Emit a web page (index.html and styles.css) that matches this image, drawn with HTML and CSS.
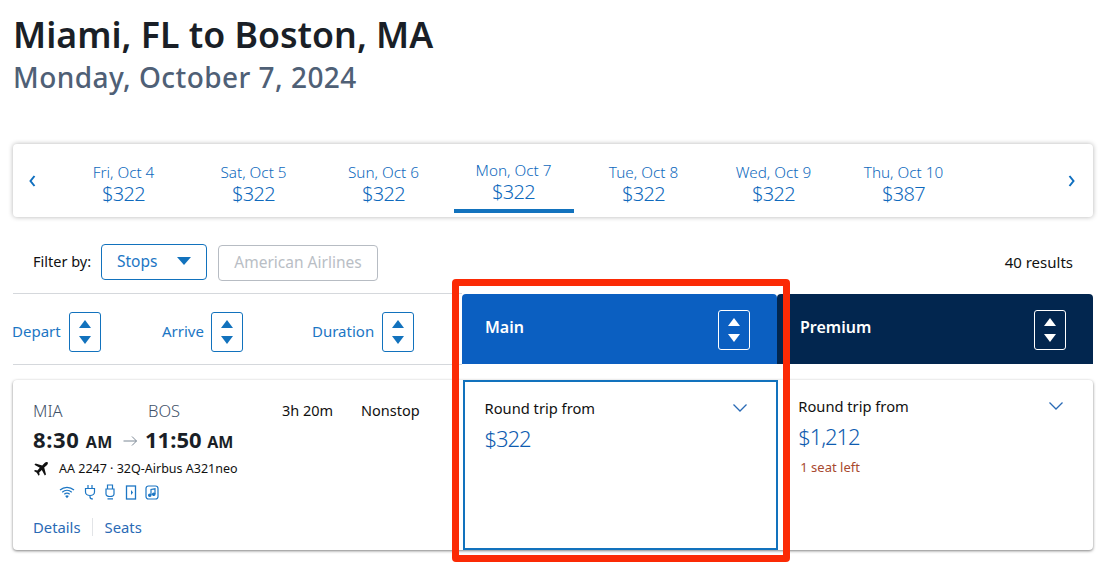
FILE: index.html
```html
<!DOCTYPE html>
<html>
  <head>
    <link rel="stylesheet" href="styles.css">
  </head>
  <body>
    <div class="page">
      <h1 class="route">Miami, FL to Boston, MA</h1>
      <div class="trip-date">Monday, October 7, 2024</div>

      <div class="date-strip">
        <span class="strip-arrow">
          <svg width="9" height="14" viewBox="0 0 9 14"><path d="M6.5 2 L2.5 7 L6.5 12" fill="none" stroke="#0f6fbf" stroke-width="2"/></svg>
        </span>
        <div class="date-list">
          <div class="date-item"><span class="day">Fri, Oct 4</span><span class="fare">$322</span></div>
          <div class="date-item"><span class="day">Sat, Oct 5</span><span class="fare">$322</span></div>
          <div class="date-item"><span class="day">Sun, Oct 6</span><span class="fare">$322</span></div>
          <div class="date-item active"><span class="day">Mon, Oct 7</span><span class="fare">$322</span></div>
          <div class="date-item"><span class="day">Tue, Oct 8</span><span class="fare">$322</span></div>
          <div class="date-item"><span class="day">Wed, Oct 9</span><span class="fare">$322</span></div>
          <div class="date-item"><span class="day">Thu, Oct 10</span><span class="fare">$387</span></div>
        </div>
        <span class="strip-arrow">
          <svg width="9" height="14" viewBox="0 0 9 14"><path d="M2.5 2 L6.5 7 L2.5 12" fill="none" stroke="#0f6fbf" stroke-width="2"/></svg>
        </span>
      </div>

      <div class="filter-row">
        <span class="filter-label">Filter by:</span>
        <button class="filter-btn stops">Stops<span class="caret"></span></button>
        <button class="filter-btn airline">American Airlines</button>
        <span class="results">40 results</span>
      </div>

      <div class="sort-row">
        <div class="sort-cols">
          <div class="sort-col depart">Depart<span class="sort-box"><i class="up"></i><i class="down"></i></span></div>
          <div class="sort-col arrive">Arrive<span class="sort-box"><i class="up"></i><i class="down"></i></span></div>
          <div class="sort-col duration">Duration<span class="sort-box"><i class="up"></i><i class="down"></i></span></div>
        </div>
        <div class="cabin main-cabin"><span class="cabin-name">Main</span><span class="sort-box light"><i class="up"></i><i class="down"></i></span></div>
        <div class="cabin premium-cabin"><span class="cabin-name">Premium</span><span class="sort-box light"><i class="up"></i><i class="down"></i></span></div>
      </div>

      <div class="flight-card">
        <div class="flight-info">
          <div class="flight-top">
            <div class="times">
              <div class="airports"><span class="origin">MIA</span><span>BOS</span></div>
              <div class="clock">
                <span class="time leaving">8:30 <small>AM</small></span>
                <svg class="arrow" width="15" height="12" viewBox="0 0 15 12"><path d="M0.5 6 H13.5 M9 1.5 L13.5 6 L9 10.5" fill="none" stroke="#7b8794" stroke-width="1"/></svg>
                <span class="time">11:50 <small>AM</small></span>
              </div>
            </div>
            <span class="duration-text">3h 20m</span>
            <span class="stops-text">Nonstop</span>
          </div>
          <div class="aircraft">
            <svg width="16" height="16" viewBox="0 0 16 16"><path d="M14.6 1.2 C13.8 .6 12.6 1 11.6 2 L9.2 4.4 L2.6 2.6 L1.4 3.8 L6.8 6.8 L4.4 9.4 L2 9 L1 10 L3.8 11.8 L5.6 14.8 L6.6 13.8 L6.2 11.4 L8.8 9 L11.8 14.6 L13 13.4 L11.2 6.6 L13.8 4.2 C14.8 3.2 15.2 2 14.6 1.2 Z" fill="#111"/></svg>
            <span>AA 2247 · 32Q-Airbus A321neo</span>
          </div>
          <div class="amenities">
            <svg width="16" height="14" viewBox="0 0 16 14" fill="none" stroke="#1c76c4" stroke-width="1.2"><path d="M1 5 C5 1.4 11 1.4 15 5 M3.2 7.2 C6 4.8 10 4.8 12.8 7.2 M5.3 9.3 C6.9 8 9.1 8 10.7 9.3 M7 11.2 C7.6 10.7 8.4 10.7 9 11.2 L8 12.4 Z"/></svg>
            <svg width="12" height="16" viewBox="0 0 12 16" fill="none" stroke="#1c76c4" stroke-width="1.2"><path d="M4 1 V4.5 M8 1 V4.5 M1.5 4.5 H10.5 V8 C10.5 10 8.5 11.5 6 11.5 C3.5 11.5 1.5 10 1.5 8 Z M6 11.5 V13 C6 14.5 7 15 9 15"/></svg>
            <svg width="12" height="16" viewBox="0 0 12 16" fill="none" stroke="#1c76c4" stroke-width="1.2"><path d="M3.5 1 H8.5 V5 H3.5 Z M2 5 H10 V10 C10 11.5 8.5 12.5 6 12.5 C3.5 12.5 2 11.5 2 10 Z M3.5 14.8 H9"/></svg>
            <svg width="12" height="15" viewBox="0 0 12 15" fill="none" stroke="#1c76c4" stroke-width="1.3"><rect x="1.5" y="1" width="9" height="13"/><path d="M6 5 L8 7.5 L6 10 Z" fill="#1c76c4" stroke="none"/></svg>
            <svg width="14" height="15" viewBox="0 0 14 15" fill="none" stroke="#1c76c4" stroke-width="1.2"><rect x="1" y="1" width="12" height="13" rx="2.5"/><path d="M6 10 V4.5 L10 3.8 V9"/><circle cx="4.8" cy="10.2" r="1.2" fill="#1c76c4"/><circle cx="8.8" cy="9.3" r="1.2" fill="#1c76c4"/></svg>
          </div>
          <div class="flight-links"><a>Details</a><a>Seats</a></div>
        </div>
        <div class="fare-cell selected">
          <div class="fare-head">
            <span>Round trip from</span>
            <svg width="16" height="10" viewBox="0 0 16 10"><path d="M1.5 1.5 L8 8 L14.5 1.5" fill="none" stroke="#2a6ab5" stroke-width="1.3"/></svg>
          </div>
          <div class="fare-price">$322</div>
        </div>
        <div class="fare-cell">
          <div class="fare-head">
            <span>Round trip from</span>
            <svg width="16" height="10" viewBox="0 0 16 10"><path d="M1.5 1.5 L8 8 L14.5 1.5" fill="none" stroke="#2a6ab5" stroke-width="1.3"/></svg>
          </div>
          <div class="fare-price">$1,212</div>
          <div class="seats-left">1 seat left</div>
        </div>
      </div>
    </div>
    <div class="highlight"></div>
  </body>
</html>
```

FILE: styles.css
```css
* {
  box-sizing: border-box;
  margin: 0;
  padding: 0;
}

html, body {
  height: 562px;
  overflow: hidden;
}

body {
  position: relative;
  background: #fff;
  font-family: "Noto Sans", "Open Sans", sans-serif;
  color: #111;
}

.page {
  padding: 11px 11px 0 13px;
}

.route {
  font-size: 35.7px;
  line-height: 46px;
  font-weight: 600;
  color: #1a1f27;
}

.trip-date {
  margin-top: 2px;
  font-size: 28px;
  line-height: 36px;
  font-weight: 500;
  color: #4f6076;
  letter-spacing: 0.45px;
}

/* date strip */
.date-strip {
  display: flex;
  align-items: center;
  justify-content: space-between;
  height: 73px;
  margin-top: 49px;
  padding: 0 17px 0 15px;
  background: #fff;
  border-radius: 4px;
  box-shadow: 0 0 5px rgba(0, 0, 0, 0.3);
}

.strip-arrow {
  display: flex;
}

.date-list {
  display: flex;
  margin-right: 98px;
  margin-left: 21px;
}

.date-item {
  position: relative;
  display: flex;
  flex-direction: column;
  align-items: center;
  width: 130px;
  height: 73px;
  padding-top: 18px;
  color: #0f6abd;
}

.day {
  font-size: 15.3px;
  line-height: 20px;
  font-weight: 300;
}

.fare {
  font-size: 20px;
  line-height: 24px;
  font-weight: 300;
  letter-spacing: -0.7px;
}

.date-item.active {
  padding-top: 16px;
}

.date-item.active::after {
  content: "";
  position: absolute;
  left: 5px;
  right: 5px;
  bottom: 4px;
  height: 4px;
  background: #1272bd;
}

/* filters */
.filter-row {
  display: flex;
  align-items: center;
  height: 36px;
  margin-top: 27px;
  padding-left: 20px;
  font-size: 14.5px;
}

.filter-label {
  width: 68px;
  margin-bottom: 3px;
}

.filter-btn {
  height: 36px;
  padding-bottom: 2px;
  border-radius: 4px;
  background: #fff;
  font-family: inherit;
  font-size: 15.5px;
}

.stops {
  display: flex;
  align-items: center;
  justify-content: space-between;
  width: 106px;
  padding: 0 15px 2px;
  border: 1px solid #1272bd;
  color: #1c76c4;
}

.caret {
  width: 0;
  height: 0;
  border-left: 7px solid transparent;
  border-right: 7px solid transparent;
  border-top: 8px solid #1272bd;
}

.airline {
  width: 160px;
  margin: 2px 0 0 11px;
  border: 1px solid #b7bcc3;
  color: #b9bec5;
}

.results {
  margin-left: auto;
  padding-right: 20px;
  font-size: 15px;
}

/* sort row */
.sort-row {
  display: flex;
  height: 72px;
  margin-top: 13px;
}

.sort-cols {
  display: flex;
  width: 449px;
  border-top: 1px solid #d5d8dc;
  border-bottom: 1px solid #d5d8dc;
}

.sort-col {
  display: flex;
  align-items: center;
  padding-top: 3px;
  font-size: 15px;
  color: #1c76c4;
}

.depart {
  width: 150px;
  margin-left: -1px;
}

.arrive {
  width: 150px;
}

.sort-col .sort-box {
  margin-top: 3px;
}

.arrive .sort-box {
  margin-left: 7px;
}

.sort-box {
  position: relative;
  display: flex;
  flex-direction: column;
  align-items: center;
  justify-content: space-between;
  width: 32px;
  height: 40px;
  margin-left: 8px;
  padding: 7px 0;
  border: 1px solid #1272bd;
  border-radius: 3px;
}

.up, .down {
  width: 0;
  height: 0;
  border-left: 6px solid transparent;
  border-right: 6px solid transparent;
}

.up {
  border-bottom: 8px solid #1272bd;
}

.down {
  border-top: 8px solid #1272bd;
}

.cabin {
  display: flex;
  align-items: center;
  justify-content: space-between;
  margin: 1px 0;
  padding: 2px 27px 0 23px;
  color: #fff;
  font-size: 16px;
  font-weight: 600;
}

.cabin-name {
  margin-bottom: 7px;
}

.main-cabin {
  width: 315px;
  background: #0b5fc1;
  border-radius: 4px 4px 0 0;
}

.premium-cabin {
  width: 316px;
  background: #02264f;
  border-radius: 4px 4px 0 0;
}

.sort-box.light {
  border-color: #fff;
}

.light .up {
  border-bottom-color: #fff;
}

.light .down {
  border-top-color: #fff;
}

/* result card */
.flight-card {
  display: flex;
  height: 170px;
  margin-top: 15px;
  background: #fff;
  border-radius: 4px;
  box-shadow: 0 1px 3px rgba(0, 0, 0, 0.5);
}

.flight-info {
  width: 450px;
  padding: 20px 0 0 20px;
}

.flight-top {
  display: flex;
  align-items: flex-start;
  font-size: 14.5px;
}

.times {
  width: 249px;
}

.airports {
  display: flex;
  font-size: 16.5px;
  line-height: 22px;
  font-weight: 300;
  color: #3f5168;
}

.origin {
  width: 115px;
}

.clock {
  display: flex;
  align-items: center;
  margin-top: 2px;
}

.time {
  font-size: 22px;
  line-height: 30px;
  font-weight: 700;
  color: #1a1f27;
}

.time small {
  font-size: 16px;
}

.leaving {
  letter-spacing: 0.6px;
}

.arrow {
  margin: 0 7px 0 10px;
}

.duration-text {
  width: 79px;
  line-height: 20px;
}

.stops-text {
  line-height: 20px;
}

.aircraft {
  display: flex;
  align-items: center;
  gap: 10px;
  margin-top: 3px;
  font-size: 12.5px;
  line-height: 18px;
}

.amenities {
  display: flex;
  align-items: center;
  gap: 8.5px;
  height: 16px;
  margin: 6px 0 0 26px;
}

.flight-links {
  display: flex;
  margin-top: 18px;
  font-size: 14.8px;
  line-height: 18px;
  color: #2a6ab5;
}

.flight-links a + a {
  margin-left: 11px;
  padding-left: 12px;
  border-left: 1px solid #e2e4e7;
}

.fare-cell {
  width: 315px;
  padding: 16px 23px 0 20px;
  font-size: 14.7px;
}

.fare-cell.selected {
  width: 316px;
  padding: 16px 23px 0 20px;
  border: 2px solid #1272bd;
}

.fare-head {
  display: flex;
  align-items: center;
  justify-content: space-between;
  padding-right: 6px;
  line-height: 20px;
}

.selected .fare-head {
  padding-right: 5px;
}

.fare-price {
  margin-top: 5px;
  font-size: 22px;
  line-height: 30px;
  font-weight: 300;
  letter-spacing: -1.1px;
  color: #0f5cb0;
}

.seats-left {
  margin-top: 7px;
  padding-left: 2px;
  font-size: 13px;
  color: #a8492f;
}

/* annotation drawn on top of the screenshot */
.highlight {
  position: absolute;
  left: 452px;
  top: 279px;
  width: 338px;
  height: 283px;
  border: 7px solid #fb2a05;
  border-radius: 4px;
}
```
